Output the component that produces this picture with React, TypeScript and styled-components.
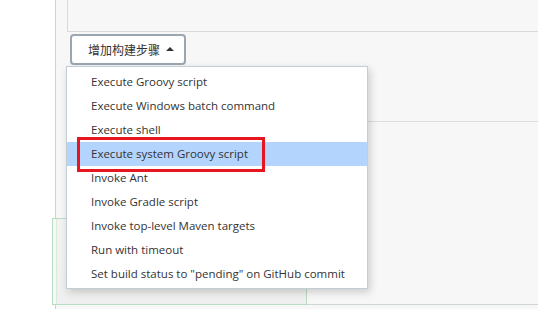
import { useState } from "react";
import styled, { createGlobalStyle } from "styled-components";

const GlobalStyle = createGlobalStyle`
    html, body {
        margin: 0;
        padding: 0;
        width: 538px;
        height: 309px;
        overflow: hidden;
        background: #ffffff;
        font-family: "Open Sans", "Noto Sans CJK SC", sans-serif;
        color: #333333;
    }
`;

const Page = styled.div`
    display: flex;
    width: 538px;
    height: 309px;
`;

const Sidebar = styled.aside`
    width: 55px;
    flex-shrink: 0;
    background: #ffffff;
    border-right: 1px solid #cfd3d6;
`;

const Main = styled.main`
    flex: 1;
    display: flex;
    flex-direction: column;
    background: #f7f7f7;
`;

const Section = styled.div`
    margin-left: 11px;
    height: 31px;
    background: #f7f7f7;
    border-left: 1px solid #dadada;
    border-bottom: 1px solid #dadada;
`;

const ButtonRow = styled.div`
    position: relative;
    margin-left: 14px;
    padding-top: 2px;
    height: 87px;
    border-bottom: 1px solid #dcdcdc;
`;

const AddStepButton = styled.button`
    display: flex;
    align-items: center;
    gap: 6px;
    height: 31px;
    width: 116px;
    padding: 0 0 0 16px;
    background: #ffffff;
    border: 2px solid #9ba6b1;
    border-radius: 4px;
    font-family: "Noto Sans CJK SC", sans-serif;
    font-size: 12px;
    color: #333333;
    cursor: pointer;
`;

const Caret = styled.span`
    width: 0;
    height: 0;
    border-left: 4px solid transparent;
    border-right: 4px solid transparent;
    border-bottom: 4px solid #333333;
    margin-top: -1px;
`;

const Menu = styled.ul`
    position: absolute;
    top: 34px;
    left: -4px;
    z-index: 10;
    width: 300px;
    margin: 0;
    padding: 3px 0 2px;
    list-style: none;
    background: #ffffff;
    border: 1px solid #c3cdd6;
    box-shadow: 2px 3px 8px rgba(0, 0, 0, 0.18);
`;

const MenuItem = styled.li<{ $active: boolean }>`
    position: relative;
    height: 24px;
    line-height: 24px;
    padding-left: 24px;
    font-size: 11.5px;
    white-space: nowrap;
    background: ${p => (p.$active ? "#b3d4fc" : "transparent")};
    cursor: pointer;
`;

const Highlight = styled.span`
    position: absolute;
    left: 10px;
    top: -5px;
    width: 182px;
    height: 29px;
    border: 3px solid #e5161f;
    pointer-events: none;
`;

const Lower = styled.div`
    flex: 1;
    display: flex;
    align-items: flex-end;
    padding-bottom: 4px;
`;

const GreenPanel = styled.div`
    position: relative;
    z-index: 1;
    margin-left: -4px;
    width: 253px;
    height: 85px;
    border: 1px solid #b7dcc3;
    background: linear-gradient(180deg, #f3f3f1 0%, #efefef 100%);
    box-shadow: inset 3px 0 0 #f7f8f6, inset 4px 0 0 #d8ebde;
`;

const Filler = styled.div`
    flex: 1;
    height: 80px;
    border-bottom: 1px solid #cfd6d6;
`;

const steps = [
    "Execute Groovy script",
    "Execute Windows batch command",
    "Execute shell",
    "Execute system Groovy script",
    "Invoke Ant",
    "Invoke Gradle script",
    "Invoke top-level Maven targets",
    "Run with timeout",
    'Set build status to "pending" on GitHub commit',
];

export default function App() {
    const [active, setActive] = useState(3);

    return (
        <>
            <GlobalStyle />
            <Page>
                <Sidebar />
                <Main>
                    <Section />
                    <ButtonRow>
                        <AddStepButton>
                            增加构建步骤
                            <Caret />
                        </AddStepButton>
                        <Menu>
                            {steps.map((s, i) => (
                                <MenuItem key={s} $active={i === active} onMouseDown={() => setActive(i)}>
                                    {s}
                                    {i === 3 && <Highlight />}
                                </MenuItem>
                            ))}
                        </Menu>
                    </ButtonRow>
                    <Lower>
                        <GreenPanel />
                        <Filler />
                    </Lower>
                </Main>
            </Page>
        </>
    );
}
